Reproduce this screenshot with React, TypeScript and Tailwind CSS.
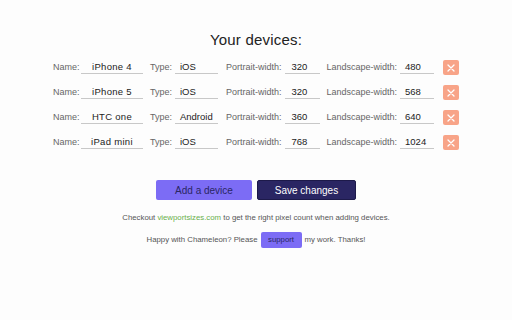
import React from "react";

const devices = [
  { name: "iPhone 4", type: "iOS", portrait: "320", landscape: "480" },
  { name: "iPhone 5", type: "iOS", portrait: "320", landscape: "568" },
  { name: "HTC one", type: "Android", portrait: "360", landscape: "640" },
  { name: "iPad mini", type: "iOS", portrait: "768", landscape: "1024" },
];

function Field({ value, className }: { value: string; className: string }) {
  return (
    <div className={`h-[13px] border-b border-[#c8c8c8] text-[9.5px] leading-[12px] text-[#222] ${className}`}>
      {value}
    </div>
  );
}

export default function App() {
  return (
    <div className="w-[512px] h-[320px] bg-[#fdfdfd] font-['Liberation_Sans',Arial,sans-serif] text-[#555]">
      <div className="flex flex-col items-center pt-[31px]">
        <h1 className="text-[15px] leading-[18px] text-[#222] tracking-[0.2px]">Your devices:</h1>

        {/* Device rows */}
        <div className="mt-[11px] flex flex-col gap-[10px]">
          {devices.map((d) => (
            <div key={d.name} className="flex items-center h-[15px] text-[9px] text-[#666]">
              <span className="w-[26px]">Name:</span>
              <Field value={d.name} className="ml-[2px] w-[62px] text-center tracking-[0.3px]" />
              <span className="ml-[7px]">Type:</span>
              <Field value={d.type} className="ml-[3px] w-[43px] pl-[5px]" />
              <span className="ml-[8px]">Portrait-width:</span>
              <Field value={d.portrait} className="ml-[3px] w-[35px] pl-[7px]" />
              <span className="ml-[7px]">Landscape-width:</span>
              <Field value={d.landscape} className="ml-[3px] w-[34px] pl-[5px]" />
              <button className="ml-[9px] w-[16px] h-[15px] rounded-[2px] bg-[#f8a488] flex items-center justify-center">
                <svg width="8" height="8" viewBox="0 0 8 8" stroke="white" strokeWidth="1.3" strokeLinecap="round">
                  <path d="M1 1L7 7M7 1L1 7" />
                </svg>
              </button>
            </div>
          ))}
        </div>

        {/* Actions */}
        <div className="mt-[30px] flex gap-[5px]">
          <button className="w-[96px] h-[20px] rounded-[2px] bg-[#7c6cf5] text-[#2a2663] text-[10px]">Add a device</button>
          <button className="w-[99px] h-[20px] rounded-[2px] bg-[#2a2663] text-white text-[10px] border border-[#1d1a4a]">Save changes</button>
        </div>

        <p className="mt-[12px] text-[7.8px] text-[#555]">
          Checkout <span className="text-[#6ab04c]">viewportsizes.com</span> to get the right pixel count when adding devices.
        </p>

        <p className="mt-[8px] flex items-center text-[7.8px] text-[#555]">
          Happy with Chameleon? Please
          <span className="mx-[3px] w-[41px] h-[16px] rounded-[2px] bg-[#7c6cf5] text-[#2a2663] flex items-center justify-center">support</span>
          my work. Thanks!
        </p>
      </div>
    </div>
  );
}
